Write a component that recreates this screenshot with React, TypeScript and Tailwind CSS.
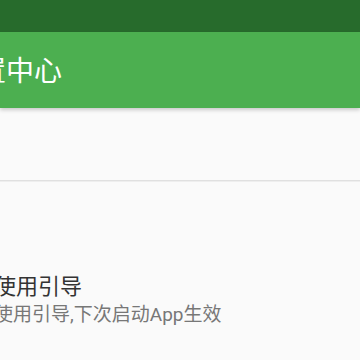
import React from 'react';

const font = { fontFamily: '"Roboto", "Noto Sans CJK SC", sans-serif' };

export default function App() {
  return (
    <div className="w-[360px] h-[360px] overflow-hidden bg-[#fafafa] relative" style={font}>
      {/* status bar */}
      <div className="h-[32px] bg-[#276b2c]" />
      {/* toolbar */}
      <div className="h-[76px] bg-[#4caf50] flex items-center relative z-10 shadow-[0_2px_4px_rgba(0,0,0,0.2)]">
        <div className="ml-[-50px] mt-[4px] text-[28px] leading-none text-white whitespace-nowrap">设置中心</div>
      </div>
      {/* first (empty) section */}
      <div className="h-[72px]" />
      <div className="h-px bg-[#e0e0e0]" />
      <div className="h-px bg-[#eeeeee]" />
      {/* preference item */}
      <div className="pt-[92px] whitespace-nowrap">
        <div className="ml-[-6px] text-[22px] leading-[26px] text-[#333333]">使用引导</div>
        <div className="ml-[-6px] text-[19px] leading-[24px] text-[#777777] mt-[3px]">使用引导,下次启动App生效</div>
      </div>
    </div>
  );
}
